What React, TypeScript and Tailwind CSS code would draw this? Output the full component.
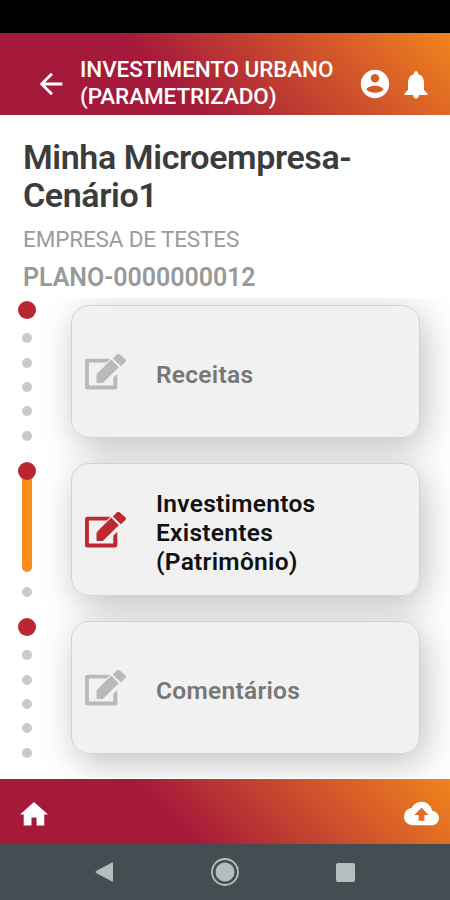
import { MdArrowBack, MdBackup } from "react-icons/md";

type Step = {
  title: string;
  active?: boolean;
  railOffset: string;
};

const steps: Step[] = [
  { title: "Receitas", railOffset: "-mt-1" },
  { title: "Investimentos Existentes (Patrimônio)", active: true, railOffset: "-mt-px" },
  { title: "Comentários", railOffset: "-mt-[3.2px]" },
];

const gradient = "bg-[linear-gradient(45deg,#a5193b_38%,#cb4d2d_68%,#f1831d_100%)]";

function EditIcon({ className }: { className: string }) {
  return (
    <svg className={className} viewBox="0 -1.2 42 38" fill="currentColor" aria-hidden="true">
      <path d="M2.5 4.5H25.5L21.5 8.4H3.9V31.3H28.3V23.5L32.3 19.5V32.7Q32.3 35.2 29.8 35.2H2.5Q0 35.2 0 32.7V7Q0 4.5 2.5 4.5Z" />
      <path d="M26.2 5.4L33.8 13L18.3 28.2Q17.8 28.7 17 28.7H12.5Q11.5 28.7 11.5 27.7V21.5Q11.5 20.3 12.4 19.4Z" />
      <path d="M27.8 4.2L31.8 .3Q33.3 -1.1 34.8 .3L40.4 5Q41.8 6.4 40.4 7.9L35.8 12.1Z" />
    </svg>
  );
}

function AccountIcon({ className }: { className: string }) {
  return (
    <svg className={className} viewBox="0 0 24 24" fill="currentColor" aria-hidden="true">
      <path d="M12 2C6.48 2 2 6.48 2 12s4.48 10 10 10 10-4.48 10-10S17.52 2 12 2zm0 3c1.66 0 3 1.34 3 3s-1.34 3-3 3-3-1.34-3-3 1.34-3 3-3zm0 13.2c-2.5 0-4.71-.7-6-2.32.03-1.79 4-2.68 6-2.68 1.99 0 5.97.89 6 2.68-1.29 1.62-3.5 2.32-6 2.32z" />
    </svg>
  );
}

function BellIcon({ className }: { className: string }) {
  return (
    <svg className={className} viewBox="0 0 24 28" fill="currentColor" aria-hidden="true">
      <path d="M12 0Q14 0 14 2.2V3Q20 5 20 12V19L23.5 22.5V24H.5V22.5L4 19V12Q4 5 10 3V2.2Q10 0 12 0Z" />
      <path d="M9 24H15Q14.5 27.5 12 27.5T9 24Z" />
    </svg>
  );
}

function HomeIcon({ className }: { className: string }) {
  return (
    <svg className={className} viewBox="0 0 28 24" fill="currentColor" aria-hidden="true">
      <path d="M14 0L28 12.6H24.3V23.5H16.5V15.5H11.5V23.5H3.7V12.6H0Z" />
    </svg>
  );
}

function Rail({ active, offset }: { active?: boolean; offset: string }) {
  return (
    <div className={`flex w-[18px] shrink-0 flex-col items-center ${offset}`}>
      <span className="relative z-10 size-[18px] shrink-0 rounded-full bg-[#b92730]" />
      {active ? (
        <>
          <span className="-mt-2 h-[100px] w-2.5 shrink-0 rounded-b-full bg-[#f88d1e]" />
          <span className="mt-[14.5px] size-2.5 shrink-0 rounded-full bg-[#cacaca]" />
        </>
      ) : (
        <div className="mt-[14.2px] flex flex-col gap-[14.4px]">
          {[0, 1, 2, 3, 4].map((dot) => (
            <span key={dot} className="size-2.5 rounded-full bg-[#cacaca]" />
          ))}
        </div>
      )}
    </div>
  );
}

function StepRow({ title, active, railOffset }: Step) {
  return (
    <div className="flex h-[158.1px] shrink-0 items-start pl-[18px]">
      <Rail active={active} offset={railOffset} />
      <div className="relative ml-[35px] h-[133px] w-[349px]">
        {/* shadow sits below every card so neighbours are not tinted */}
        <div className="absolute inset-0 -z-10 rounded-[18px] shadow-[5px_9px_36px_rgba(0,0,0,0.25)]" />
        <button className="flex h-full w-full items-center rounded-[18px] border border-[#d2d2d2] bg-[#f1f1f1] pl-[13px] text-left">
          <EditIcon
            className={`h-[38px] w-[42px] shrink-0 ${active ? "text-[#bd2832]" : "text-[#b9b9b9]"}`}
          />
          <span
            className={`mt-[5px] ml-[29px] w-[190px] text-[24.5px] leading-[29px] font-semibold tracking-[0.28px] ${
              active ? "text-[#111]" : "text-[#777]"
            }`}
          >
            {title}
          </span>
        </button>
      </div>
    </div>
  );
}

export default function App() {
  return (
    <div className="flex h-[900px] w-[450px] flex-col overflow-hidden bg-white font-[Roboto,sans-serif]">
      <div className="h-[33px] shrink-0 bg-black" />

      <header className={`flex h-[82px] shrink-0 items-center pt-5 pl-[34px] text-white ${gradient}`}>
        <MdArrowBack className="size-[34px] shrink-0" />
        <h1 className="-mt-0.5 ml-3 w-[270px] text-[22.5px] leading-[27px] font-medium tracking-[-0.1px]">
          INVESTIMENTO URBANO (PARAMETRIZADO)
        </h1>
        <AccountIcon className="ml-[7.5px] size-[34px] shrink-0" />
        <BellIcon className="mt-px ml-[12.5px] h-7 w-6 shrink-0" />
      </header>

      <section className="h-[183px] shrink-0 pt-[23px] pl-[23px]">
        <h2 className="w-[380px] text-[34px] leading-[38px] font-semibold tracking-[-0.4px] text-[#3c3c3c]">
          Minha Microempresa-
          <br />
          Cenário1
        </h2>
        <p className="mt-3 text-[22.5px] leading-[26px] tracking-[-0.15px] text-[#9b9b9b]">
          EMPRESA DE TESTES
        </p>
        <p className="mt-[13px] text-[25px] leading-[26px] font-semibold tracking-[-0.05px] text-[#999]">
          PLANO-0000000012
        </p>
      </section>

      <main className="isolate flex h-[480px] shrink-0 flex-col overflow-hidden pt-[7px]">
        {steps.map((step) => (
          <StepRow key={step.title} {...step} />
        ))}
      </main>

      <nav
        className={`mt-px flex h-[65px] shrink-0 items-center justify-between pt-1 pr-[11px] pl-5 text-white ${gradient}`}
      >
        <HomeIcon className="h-6 w-7" />
        <MdBackup className="size-[35px]" />
      </nav>

      <div className="flex h-14 shrink-0 items-center bg-[#454d52] text-[#b6bdbf]">
        <svg className="ml-[95px] h-5 w-[18px]" viewBox="0 0 18 20" fill="currentColor" aria-hidden="true">
          <path d="M17 .5Q18 0 18 1.5V18.5Q18 20 17 19.5L.8 10.8Q0 10 .8 9.2Z" />
        </svg>
        <svg className="ml-[98px] size-7" viewBox="0 0 28 28" fill="none" aria-hidden="true">
          <circle cx="14" cy="14" r="13" stroke="currentColor" strokeWidth="1.8" />
          <circle cx="14" cy="14" r="9.5" fill="currentColor" />
        </svg>
        <span className="ml-[97px] size-[19px] rounded-[2px] bg-current" />
      </div>
    </div>
  );
}
